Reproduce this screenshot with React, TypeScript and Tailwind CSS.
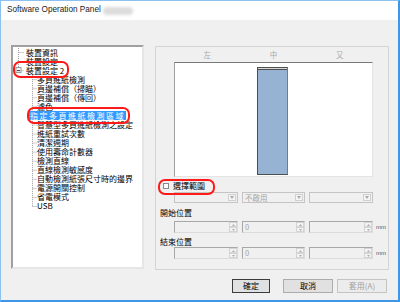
import React from "react";

const cjk = "font-['Noto_Sans_CJK_TC','Noto_Sans_CJK_SC',sans-serif]";

const tree = [
  { t: "裝置資訊", lvl: 0 },
  { t: "裝置設定", lvl: 0 },
  { t: "裝置設定 2", lvl: 0 },
  { t: "多頁進紙檢測", lvl: 1 },
  { t: "頁邊補償（掃瞄）", lvl: 1 },
  { t: "頁邊補償（傳回）", lvl: 1 },
  { t: "濾色", lvl: 1 },
  { t: "指定多頁進紙檢測區域", lvl: 1, sel: true },
  { t: "智慧型多頁進紙檢測之設定", lvl: 1 },
  { t: "進紙重試次數", lvl: 1 },
  { t: "清潔週期", lvl: 1 },
  { t: "使用壽命計數器", lvl: 1 },
  { t: "檢測直線", lvl: 1 },
  { t: "直線檢測敏感度", lvl: 1 },
  { t: "自動檢測紙張尺寸時的邊界", lvl: 1 },
  { t: "電源開關控制", lvl: 1 },
  { t: "省電模式", lvl: 1 },
  { t: "USB", lvl: 1 },
];

const ROW = 9.06;

function TreeLines() {
  const c = (i: number) => 5 + ROW * i;
  return (
    <svg className="absolute left-0 top-0" width="130" height="220">
      <g stroke="#a0a0a0" strokeWidth="1" strokeDasharray="1 1" fill="none">
        <line x1="5.5" y1="1" x2="5.5" y2={c(2) - 3} />
        <line x1="5.5" y1={c(0) + 0.5} x2="11" y2={c(0) + 0.5} />
        <line x1="5.5" y1={c(1) + 0.5} x2="11" y2={c(1) + 0.5} />
        <line x1="8.5" y1={c(2) + 0.5} x2="11" y2={c(2) + 0.5} />
        <line x1="19.5" y1={c(3) - 4} x2="19.5" y2={c(17) + 0.5} />
        {tree.map((it, i) =>
          it.lvl === 1 ? (
            <line key={i} x1="19.5" y1={c(i) + 0.5} x2="24" y2={c(i) + 0.5} />
          ) : null
        )}
      </g>
      <rect x="3" y={c(2) - 2.5} width="5" height="5" fill="white" stroke="#909090" />
      <line x1="4" y1={c(2) + 0.5} x2="7" y2={c(2) + 0.5} stroke="#303030" />
    </svg>
  );
}

function Dropdown({ text }: { text?: string }) {
  return (
    <div className="flex h-[11px] items-stretch border border-[#c4c4c4] bg-[#f0f0f0]">
      <div className="flex-1 pl-[2px] text-[7.5px] leading-[9px] text-[#a6a6a6]">{text}</div>
      <div className="m-[1px] flex w-[8px] items-center justify-center border border-[#d0d0d0] bg-[#f4f4f4]">
        <svg width="4" height="3">
          <path d="M0 0 L4 0 L2 3 Z" fill="#a8a8a8" />
        </svg>
      </div>
    </div>
  );
}

function Spin({ text }: { text?: string }) {
  return (
    <div className="flex h-[12px] items-stretch border border-t-[#a8a8a8] border-l-[#a8a8a8] border-r-[#dcdcdc] border-b-[#dcdcdc] bg-[#f0f0f0]">
      <div className="flex-1 pl-[2px] text-[7.5px] leading-[10px] text-[#a6a6a6]">{text}</div>
      <div className="flex w-[8px] flex-col">
        <div className="flex flex-1 items-center justify-center border border-[#d4d4d4] bg-[#f4f4f4]">
          <svg width="3" height="2">
            <path d="M0 2 L3 2 L1.5 0 Z" fill="#b0b0b0" />
          </svg>
        </div>
        <div className="flex flex-1 items-center justify-center border border-[#d4d4d4] bg-[#f4f4f4]">
          <svg width="3" height="2">
            <path d="M0 0 L3 0 L1.5 2 Z" fill="#b0b0b0" />
          </svg>
        </div>
      </div>
    </div>
  );
}

function FieldRow({ children, mm }: { children: React.ReactNode; mm?: boolean }) {
  return (
    <div className="ml-[18px] flex items-center gap-[4px]">
      {children}
      {mm && <span className="ml-[-1px] font-['Liberation_Sans',sans-serif] text-[6px] leading-[6px] text-[#555]">mm</span>}
    </div>
  );
}

export default function App() {
  return (
    <div className={`relative h-[302px] w-[400px] overflow-hidden border-l border-r-2 border-b-2 border-t border-l-[#8cc0ee] border-t-[#8cc0ee] border-r-[#3d97e6] border-b-[#3d97e6] bg-[#f0f0f0] ${cjk}`}>
      {/* title bar */}
      <div className="flex h-[19px] items-center bg-white pl-[6px]">
        <span className="font-['Liberation_Sans',sans-serif] text-[8.2px] text-[#1a1a1a]">Software Operation Panel</span>
        <span className="ml-[2px] h-[8px] w-[30px] rounded-sm bg-[#dcdcdc] blur-[1.5px]" />
      </div>

      <div className="flex pt-[25px] pl-[10px]">
        {/* tree */}
        <div className="relative h-[224px] w-[133px] border-2 border-t-[#a0a0a0] border-l-[#a0a0a0] border-r-[#e6e6e6] border-b-[#e6e6e6] bg-white">
          <TreeLines />
          <div className="relative pt-[0.5px] text-[8px] text-black">
            {tree.map((it, i) => (
              <div key={i} className="flex h-[9.06px] items-center whitespace-nowrap leading-[9px]">
                {it.sel ? (
                  <span className="ml-[16px] bg-[#3399ff] px-[1px] tracking-[1.5px] text-white">{it.t}</span>
                ) : (
                  <span className={it.lvl === 0 ? "ml-[13px]" : "ml-[24px]"}>{it.t}</span>
                )}
              </div>
            ))}
          </div>
        </div>

        {/* right */}
        <div className="ml-[11px] flex w-[234px] flex-col">
          <div className="mt-[1px] h-[224px] border border-[#d4d4d4]">
            <div className="ml-[18px] mt-[2.5px] grid h-[9px] w-[199px] grid-cols-3 text-center text-[7.5px] leading-[9px] text-[#a8a8a8]">
              <span>左</span>
              <span>中</span>
              <span>又</span>
            </div>
            <div className="ml-[18px] mt-[3.5px] h-[115px] w-[199px] border border-t-[#7a7a7a] border-l-[#a0a0a0] border-r-[#e4e4e4] border-b-[#e4e4e4] bg-white">
              <div className="ml-[82px] mt-[4px] flex h-[108px] w-[31px] flex-col border border-[#4d4d4d] border-r-[#6a7c90] bg-[#97b3d3]">
                <div className="h-[2px] border-b border-[#4d4d4d] bg-[#d8d8d8]" />
              </div>
            </div>
            <div className="mt-[4px] flex h-[9px] items-center text-[8px] leading-[9px]">
              <span className="ml-[7px] h-[6px] w-[6px] border border-[#8a8a8a] bg-white" />
              <span className="ml-[4px]">選擇範圍</span>
            </div>
            <div className="mt-[2px]">
              <FieldRow>
                <div className="w-[64px]"><Dropdown /></div>
                <div className="w-[63px]"><Dropdown text="不啟用" /></div>
                <div className="w-[64px]"><Dropdown /></div>
              </FieldRow>
            </div>
            <div className="ml-[4px] mt-[4.5px] h-[9px] text-[8px] leading-[9px]">開始位置</div>
            <div className="mt-[4.5px]">
              <FieldRow mm>
                <div className="w-[64px]"><Spin /></div>
                <div className="w-[63px]"><Spin text="0" /></div>
                <div className="w-[64px]"><Spin /></div>
              </FieldRow>
            </div>
            <div className="ml-[4px] mt-[3.5px] h-[9px] text-[8px] leading-[9px]">結束位置</div>
            <div className="mt-[1.5px]">
              <FieldRow mm>
                <div className="w-[64px]"><Spin /></div>
                <div className="w-[63px]"><Spin text="0" /></div>
                <div className="w-[64px]"><Spin /></div>
              </FieldRow>
            </div>
          </div>

          <div className="mt-[9px] flex h-[14px] text-[8px] leading-[12px]">
            <div className="ml-[77px] w-[38px] border border-[#3c3c3c] bg-[#e1e1e1] text-center">確定</div>
            <div className="ml-[13px] w-[50px] border border-[#adadad] bg-[#e1e1e1] text-center">取消</div>
            <div className="ml-[4px] w-[50px] border border-[#c4c4c4] bg-[#ececec] text-center text-[#a0a0a0]">套用(A)</div>
          </div>
        </div>
      </div>

      {/* red annotations */}
      <div className="pointer-events-none absolute left-[12px] top-[60px] h-[17px] w-[56px] rounded-[7px] border-2 border-[#ff1a1a]" />
      <div className="pointer-events-none absolute left-[26px] top-[106px] h-[17px] w-[103px] rounded-[7px] border-2 border-[#ff1a1a]" />
      <div className="pointer-events-none absolute left-[157px] top-[178px] h-[16px] w-[57px] rounded-[7px] border-2 border-[#ff1a1a]" />
    </div>
  );
}
